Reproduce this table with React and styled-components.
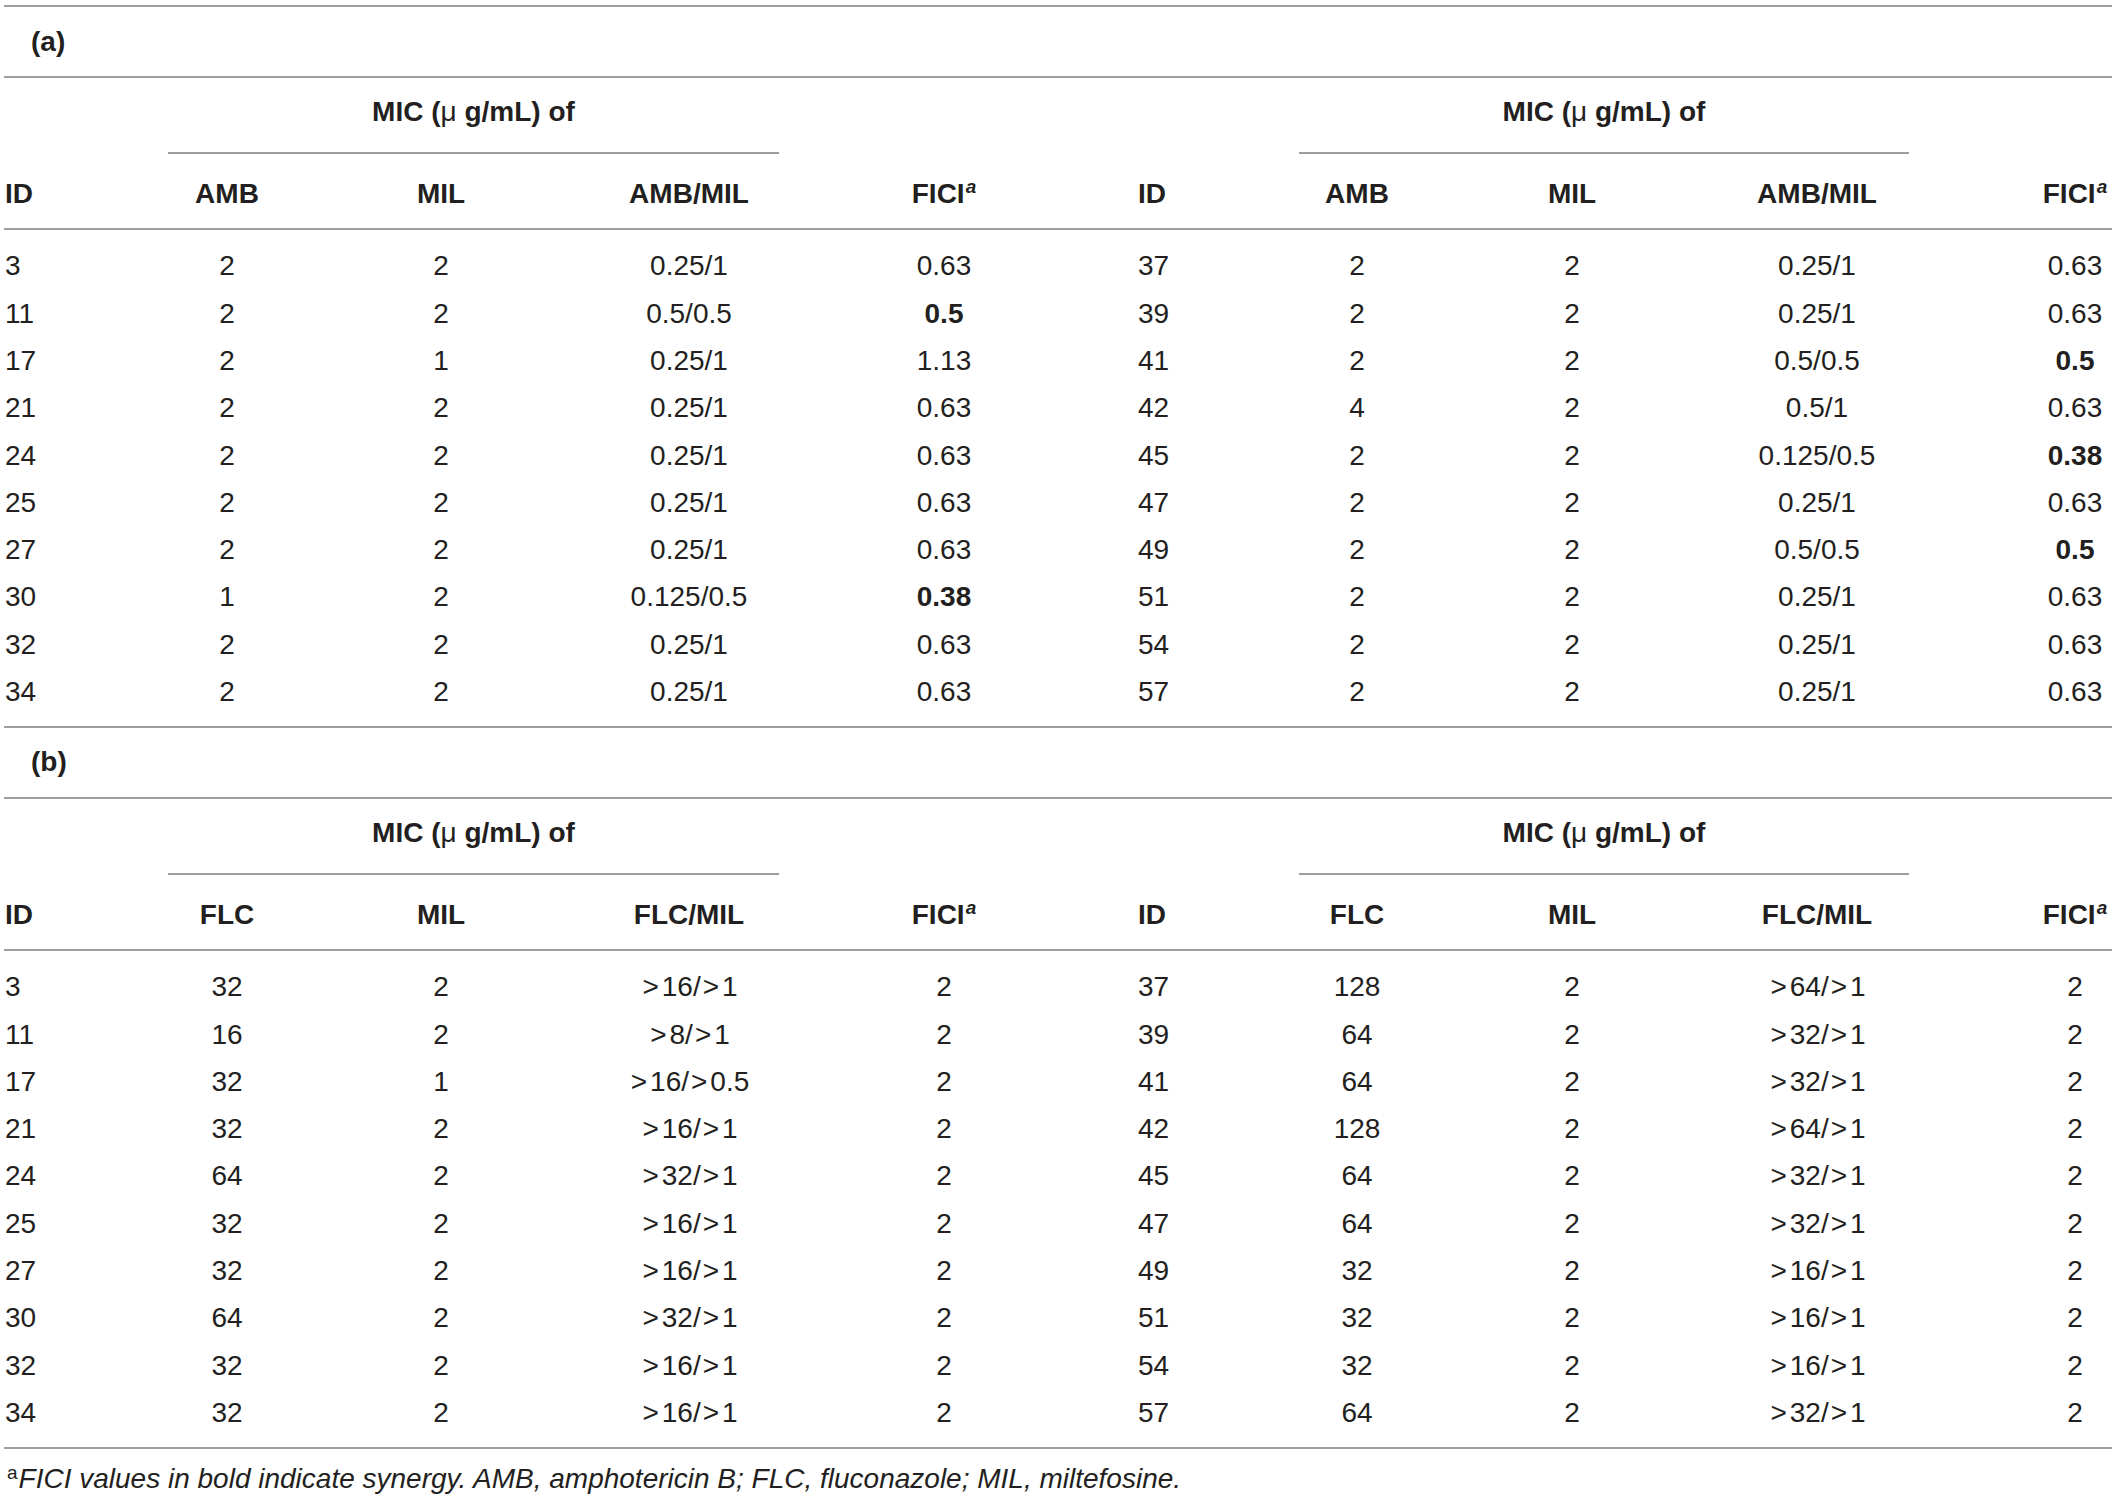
import React from "react";
import styled, { createGlobalStyle } from "styled-components";

const LINE = "#9d9d9d";
const INK = "#231f20";

// 10 columns: left half (ID..FICI) + right half (ID..FICI)
const COLS = "154px 138px 290px 206px 304px 195px 132px 298px 192px 199px";

const cols = [
  { align: "left", pl: 1 },
  { align: "center" },
  { align: "center" },
  { align: "center" },
  { align: "center" },
  { align: "left", pl: 42 },
  { align: "center" },
  { align: "center" },
  { align: "center" },
  { align: "center", pl: 125 },
];

const GlobalStyle = createGlobalStyle`
  html, body {
    margin: 0;
    padding: 0;
    background: #fff;
  }
  body {
    font-family: "Liberation Sans", Arial, Helvetica, sans-serif;
    font-size: 28px;
    color: ${INK};
  }
`;

const Page = styled.div`
  width: 2108px;
  padding: 5px 0 0 4px;
`;

const Section = styled.section`
  border-top: 2px solid ${LINE};
`;

const CaptionRow = styled.div`
  height: 69px;
  display: flex;
  align-items: center;
  padding-left: 27px;
  font-weight: bold;
  border-bottom: 2px solid ${LINE};
`;

const Row = styled.div`
  display: grid;
  grid-template-columns: ${COLS};
`;

const SpanRow = styled(Row)`
  height: 76px;
`;

const SpanHead = styled.div`
  grid-column: ${({ $col }) => $col};
  margin: 0 ${({ $mr }) => $mr}px 0 ${({ $ml }) => $ml}px;
  box-sizing: border-box;
  height: 76px;
  padding-top: 18px;
  line-height: 32px;
  text-align: center;
  font-weight: bold;
  border-bottom: 2px solid ${LINE};
`;

const Mu = styled.span`
  font-weight: normal;
`;

const HeadRow = styled(Row)`
  box-sizing: border-box;
  height: 76px;
  padding-top: 24px;
  font-weight: bold;
  line-height: 32px;
  border-bottom: 2px solid ${LINE};
`;

const Cell = styled.div`
  text-align: ${({ $align }) => $align};
  padding-left: ${({ $pl }) => $pl || 0}px;
  white-space: nowrap;
`;

const Body = styled.div`
  padding: 12.35px 0 10.65px;
`;

const DataRow = styled(Row)`
  height: 47.3px;
  line-height: 47.3px;
`;

const Strong = styled.span`
  font-weight: bold;
`;

const Gt = styled.span`
  margin: 0 3px 0 2px;
`;

const HeadSup = styled.sup`
  font-size: 19px;
  font-style: italic;
  line-height: 0;
  vertical-align: 10px;
  margin-left: 1px;
`;

const Footnote = styled.p`
  margin: 0;
  padding: 14px 0 0 3px;
  line-height: 32px;
  font-style: italic;
  border-top: 2px solid ${LINE};
  white-space: nowrap;
`;

const NoteSup = styled.sup`
  font-size: 19px;
  font-style: normal;
  line-height: 0;
  vertical-align: 9px;
  margin-right: 1px;
`;

// (a) AMB + MIL
const tableA = {
  label: "(a)",
  drugs: ["AMB", "MIL", "AMB/MIL"],
  left: [
    ["3", "2", "2", "0.25/1", "0.63"],
    ["11", "2", "2", "0.5/0.5", "*0.5"],
    ["17", "2", "1", "0.25/1", "1.13"],
    ["21", "2", "2", "0.25/1", "0.63"],
    ["24", "2", "2", "0.25/1", "0.63"],
    ["25", "2", "2", "0.25/1", "0.63"],
    ["27", "2", "2", "0.25/1", "0.63"],
    ["30", "1", "2", "0.125/0.5", "*0.38"],
    ["32", "2", "2", "0.25/1", "0.63"],
    ["34", "2", "2", "0.25/1", "0.63"],
  ],
  right: [
    ["37", "2", "2", "0.25/1", "0.63"],
    ["39", "2", "2", "0.25/1", "0.63"],
    ["41", "2", "2", "0.5/0.5", "*0.5"],
    ["42", "4", "2", "0.5/1", "0.63"],
    ["45", "2", "2", "0.125/0.5", "*0.38"],
    ["47", "2", "2", "0.25/1", "0.63"],
    ["49", "2", "2", "0.5/0.5", "*0.5"],
    ["51", "2", "2", "0.25/1", "0.63"],
    ["54", "2", "2", "0.25/1", "0.63"],
    ["57", "2", "2", "0.25/1", "0.63"],
  ],
};

// (b) FLC + MIL
const tableB = {
  label: "(b)",
  drugs: ["FLC", "MIL", "FLC/MIL"],
  left: [
    ["3", "32", "2", ">16/>1", "2"],
    ["11", "16", "2", ">8/>1", "2"],
    ["17", "32", "1", ">16/>0.5", "2"],
    ["21", "32", "2", ">16/>1", "2"],
    ["24", "64", "2", ">32/>1", "2"],
    ["25", "32", "2", ">16/>1", "2"],
    ["27", "32", "2", ">16/>1", "2"],
    ["30", "64", "2", ">32/>1", "2"],
    ["32", "32", "2", ">16/>1", "2"],
    ["34", "32", "2", ">16/>1", "2"],
  ],
  right: [
    ["37", "128", "2", ">64/>1", "2"],
    ["39", "64", "2", ">32/>1", "2"],
    ["41", "64", "2", ">32/>1", "2"],
    ["42", "128", "2", ">64/>1", "2"],
    ["45", "64", "2", ">32/>1", "2"],
    ["47", "64", "2", ">32/>1", "2"],
    ["49", "32", "2", ">16/>1", "2"],
    ["51", "32", "2", ">16/>1", "2"],
    ["54", "32", "2", ">16/>1", "2"],
    ["57", "64", "2", ">32/>1", "2"],
  ],
};

// "*" marks a bold (synergy) value, ">" gets a little air around it
function Value({ v }) {
  if (v.startsWith("*")) return <Strong>{v.slice(1)}</Strong>;
  if (!v.includes(">")) return v;
  const parts = v.split(">");
  return parts.map((p, i) => (
    <React.Fragment key={i}>
      {i > 0 && <Gt>&gt;</Gt>}
      {p}
    </React.Fragment>
  ));
}

const MicTitle = () => (
  <>
    MIC (<Mu>μ</Mu> g/mL) of
  </>
);

function DrugTable({ data }) {
  const heads = ["ID", ...data.drugs, "FICI"];
  const allHeads = [...heads, ...heads];

  return (
    <Section>
      <CaptionRow>{data.label}</CaptionRow>

      <SpanRow>
        <SpanHead $col="2 / 5" $ml={10} $mr={13}>
          <MicTitle />
        </SpanHead>
        <SpanHead $col="7 / 10" $ml={8} $mr={4}>
          <MicTitle />
        </SpanHead>
      </SpanRow>

      <HeadRow>
        {allHeads.map((h, i) => (
          <Cell key={i} $align={cols[i].align} $pl={cols[i].pl}>
            {h}
            {h === "FICI" && <HeadSup>a</HeadSup>}
          </Cell>
        ))}
      </HeadRow>

      <Body>
        {data.left.map((row, r) => (
          <DataRow key={r}>
            {[...row, ...data.right[r]].map((v, i) => (
              <Cell key={i} $align={cols[i].align} $pl={cols[i].pl}>
                <Value v={v} />
              </Cell>
            ))}
          </DataRow>
        ))}
      </Body>
    </Section>
  );
}

export default function App() {
  return (
    <>
      <GlobalStyle />
      <Page>
        <DrugTable data={tableA} />
        <DrugTable data={tableB} />
        <Footnote>
          <NoteSup>a</NoteSup>FICI values in bold indicate synergy. AMB, amphotericin B; FLC,
          fluconazole; MIL, miltefosine.
        </Footnote>
      </Page>
    </>
  );
}
